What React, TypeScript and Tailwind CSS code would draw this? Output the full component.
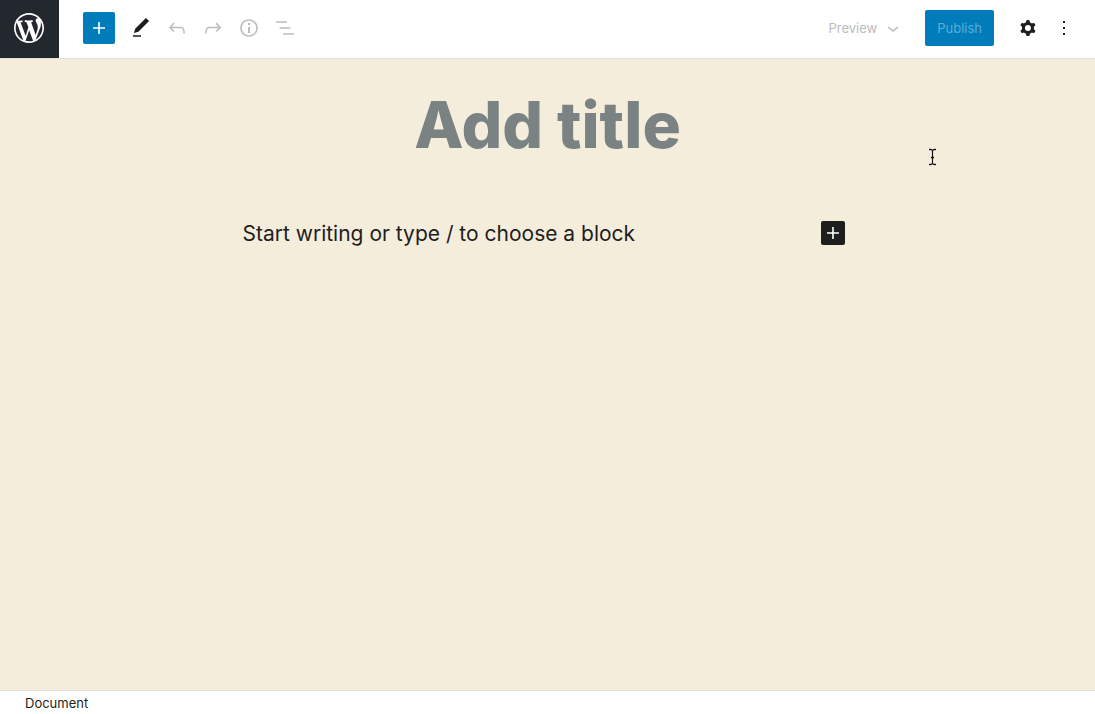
import type { ReactNode } from 'react'

type IconProps = {
  children: ReactNode
  className?: string
  viewBox?: string
}

function Icon({ children, className = 'size-6', viewBox = '0 0 24 24' }: IconProps) {
  return (
    <svg className={className} viewBox={viewBox} fill="currentColor" aria-hidden="true">
      {children}
    </svg>
  )
}

function WordPressIcon() {
  return (
    <Icon className="size-9" viewBox="-2 -2 24 24">
      <path d="M20 10c0-5.51-4.49-10-10-10C4.48 0 0 4.49 0 10c0 5.52 4.48 10 10 10 5.51 0 10-4.48 10-10zM7.78 15.37L4.37 6.22c.55-.02 1.17-.08 1.17-.08.5-.06.44-1.13-.06-1.11 0 0-1.45.11-2.37.11-.18 0-.37 0-.58-.01C4.12 2.69 6.87 1.11 10 1.11c2.33 0 4.45.87 6.05 2.34-.68-.11-1.65.39-1.65 1.58 0 .74.45 1.36.9 2.1.35.61.55 1.36.55 2.46 0 1.49-1.4 5-1.4 5l-3.03-8.37c.54-.02.82-.17.82-.17.5-.05.44-1.25-.06-1.22 0 0-1.44.12-2.38.12-.87 0-2.33-.12-2.33-.12-.5-.03-.56 1.2-.06 1.22l.92.08 1.26 3.41zM17.41 10c.24-.64.74-1.87.43-4.25.7 1.29 1.05 2.71 1.05 4.25 0 3.29-1.73 6.24-4.4 7.78.97-2.59 1.94-5.2 2.92-7.78zM6.1 18.09C3.12 16.65 1.11 13.53 1.11 10c0-1.3.23-2.48.72-3.59C3.25 10.3 4.67 14.2 6.1 18.09zm4.03-6.63l2.58 6.98c-.86.29-1.76.45-2.71.45-.79 0-1.57-.11-2.29-.33.81-2.38 1.62-4.74 2.42-7.1z" />
    </Icon>
  )
}

function PlusIcon() {
  return (
    <Icon>
      <path d="M18 11.2h-5.2V6h-1.6v5.2H6v1.6h5.2V18h1.6v-5.2H18z" />
    </Icon>
  )
}

const tools = [
  {
    label: 'Undo',
    path: 'M18.3 11.7c-.6-.6-1.4-.9-2.3-.9H6.7l2.9-3.3-1.1-1-4.5 5L8.5 16l1-1-2.7-2.7H16c.5 0 .9.2 1.3.5 1 1 1 3.4 1 4.5v.3h1.5v-.2c0-1.5 0-4.3-1.5-5.7z',
  },
  {
    label: 'Redo',
    path: 'M15.6 6.5l-1.1 1 2.9 3.3H8c-.9 0-1.7.3-2.3.9-1.4 1.5-1.4 4.2-1.4 5.6v.2h1.5v-.3c0-1.1 0-3.5 1-4.5.3-.3.7-.5 1.3-.5h9.2L14.5 15l1.1 1.1 4.6-4.6-4.6-5z',
  },
  {
    label: 'Details',
    path: 'M12 3.2c-4.8 0-8.8 3.9-8.8 8.8 0 4.8 3.9 8.8 8.8 8.8 4.8 0 8.8-3.9 8.8-8.8 0-4.8-4-8.8-8.8-8.8zm0 16c-4 0-7.2-3.3-7.2-7.2C4.8 8 8 4.8 12 4.8s7.2 3.3 7.2 7.2c0 4-3.2 7.2-7.2 7.2zM11 17h2v-6h-2v6zm0-8h2V7h-2v2z',
  },
  {
    label: 'List view',
    path: 'M13.8 5.2H3v1.5h10.8V5.2zm-3.6 12v1.5H21v-1.5H10.2zm7.2-6H6.6v1.5h10.8v-1.5z',
  },
]

function Header() {
  return (
    <header className="flex items-stretch border-b border-[#e0e0e0] bg-white">
      <a
        href="#posts"
        aria-label="View posts"
        className="flex h-[58px] w-[59px] items-center justify-center bg-[#23282e] pr-px pb-0.5 text-white"
      >
        <WordPressIcon />
      </a>
      <div className="flex flex-1 items-center justify-between pr-[13px] pb-0.5 pl-6">
        <div className="flex items-center">
          <button
            aria-label="Add block"
            className="mr-2 flex size-8 items-center justify-center rounded-xs bg-[#007cba] text-white"
          >
            <PlusIcon />
          </button>
          <button aria-label="Tools" className="flex size-9 items-center justify-center text-[#1e1e1e]">
            <Icon>
              <path d="M20.1 5.1L16.9 2 6.2 12.7l-1.3 4.4 4.5-1.3L20.1 5.1zM4 20.8h8v-1.5H4v1.5z" />
            </Icon>
          </button>
          {tools.map((tool) => (
            <button
              key={tool.label}
              aria-label={tool.label}
              disabled
              className="flex size-9 items-center justify-center text-[#bcbcbc]"
            >
              <Icon>
                <path d={tool.path} />
              </Icon>
            </button>
          ))}
        </div>
        <div className="flex items-center">
          <button disabled className="mr-5 flex h-9 items-center gap-1 text-[13px] text-[#bcbcbc]">
            <span className="pt-0.5">Preview</span>
            <Icon>
              <path d="M17.5 11.6L12 16l-5.5-4.4.9-1.2L12 14l4.5-3.6 1 1.2z" />
            </Icon>
          </button>
          <button disabled className="mr-4 h-9 rounded-xs bg-[#007cba] px-3 pt-0.5 text-[13px] text-[#5caed6]">
            Publish
          </button>
          <button aria-label="Settings" className="flex size-9 items-center justify-center text-[#1e1e1e]">
            <Icon>
              <path
                fillRule="evenodd"
                clipRule="evenodd"
                d="M10.289 4.836A1 1 0 0111.275 4h1.306a1 1 0 01.987.836l.244 1.466c.787.26 1.503.679 2.108 1.218l1.393-.522a1 1 0 011.216.437l.653 1.13a1 1 0 01-.23 1.273l-1.148.944a6.025 6.025 0 010 2.435l1.149.946a1 1 0 01.23 1.272l-.653 1.13a1 1 0 01-1.216.437l-1.394-.522c-.605.54-1.32.958-2.108 1.218l-.244 1.466a1 1 0 01-.987.836h-1.306a1 1 0 01-.986-.836l-.244-1.466a5.995 5.995 0 01-2.108-1.218l-1.394.522a1 1 0 01-1.217-.436l-.653-1.131a1 1 0 01.23-1.272l1.149-.946a6.026 6.026 0 010-2.435l-1.148-.944a1 1 0 01-.23-1.272l.653-1.131a1 1 0 011.217-.437l1.393.522a5.994 5.994 0 012.108-1.218l.244-1.466zM14.929 12a3 3 0 11-6 0 3 3 0 016 0z"
              />
            </Icon>
          </button>
          <button aria-label="Options" className="flex size-9 items-center justify-center text-[#1e1e1e]">
            <Icon>
              <path d="M13 19h-2v-2h2v2zm0-6h-2v-2h2v2zm0-6h-2V5h2v2z" />
            </Icon>
          </button>
        </div>
      </div>
    </header>
  )
}

function TextCursor() {
  return (
    <svg
      className="absolute top-[148px] left-[927px] h-[18px] w-[11px]"
      viewBox="0 0 11 18"
      fill="none"
      aria-hidden="true"
    >
      <path d="M2 1.5h2l1.5 1 1.5-1h2M5.5 2v14M2 16.5h2l1.5-1 1.5 1h2M4 9.5h3" stroke="#fff" strokeWidth="3" />
      <path d="M2 1.5h2l1.5 1 1.5-1h2M5.5 2v14M2 16.5h2l1.5-1 1.5 1h2M4 9.5h3" stroke="#111" strokeWidth="1.3" />
    </svg>
  )
}

export default function App() {
  return (
    <div className="relative flex min-h-screen flex-col bg-[#f5eddc] font-['Inter',sans-serif]">
      <Header />
      <main className="flex-1 px-6">
        <div className="mx-auto mt-[26px] max-w-[610px]">
          <input
            type="text"
            aria-label="Add title"
            placeholder="Add title"
            className="block h-20 w-full bg-transparent text-center text-[64px] font-extrabold outline-none placeholder:text-[#7b8283]"
          />
          <div className="mt-[50px] flex items-center pr-2">
            <input
              type="text"
              aria-label="Empty block"
              placeholder="Start writing or type / to choose a block"
              className="h-9 min-w-0 flex-1 bg-transparent text-[21px] outline-none placeholder:text-[#1e1e1e]"
            />
            <button
              aria-label="Add block"
              className="flex size-6 items-center justify-center rounded-xs bg-[#1e1e1e] text-white"
            >
              <PlusIcon />
            </button>
          </div>
        </div>
      </main>
      <footer className="border-t border-[#e0e0e0] bg-white px-[25px] pt-1 pb-0.5 text-[13px] leading-[17px] text-[#1e1e1e]">
        Document
      </footer>
      <TextCursor />
    </div>
  )
}
